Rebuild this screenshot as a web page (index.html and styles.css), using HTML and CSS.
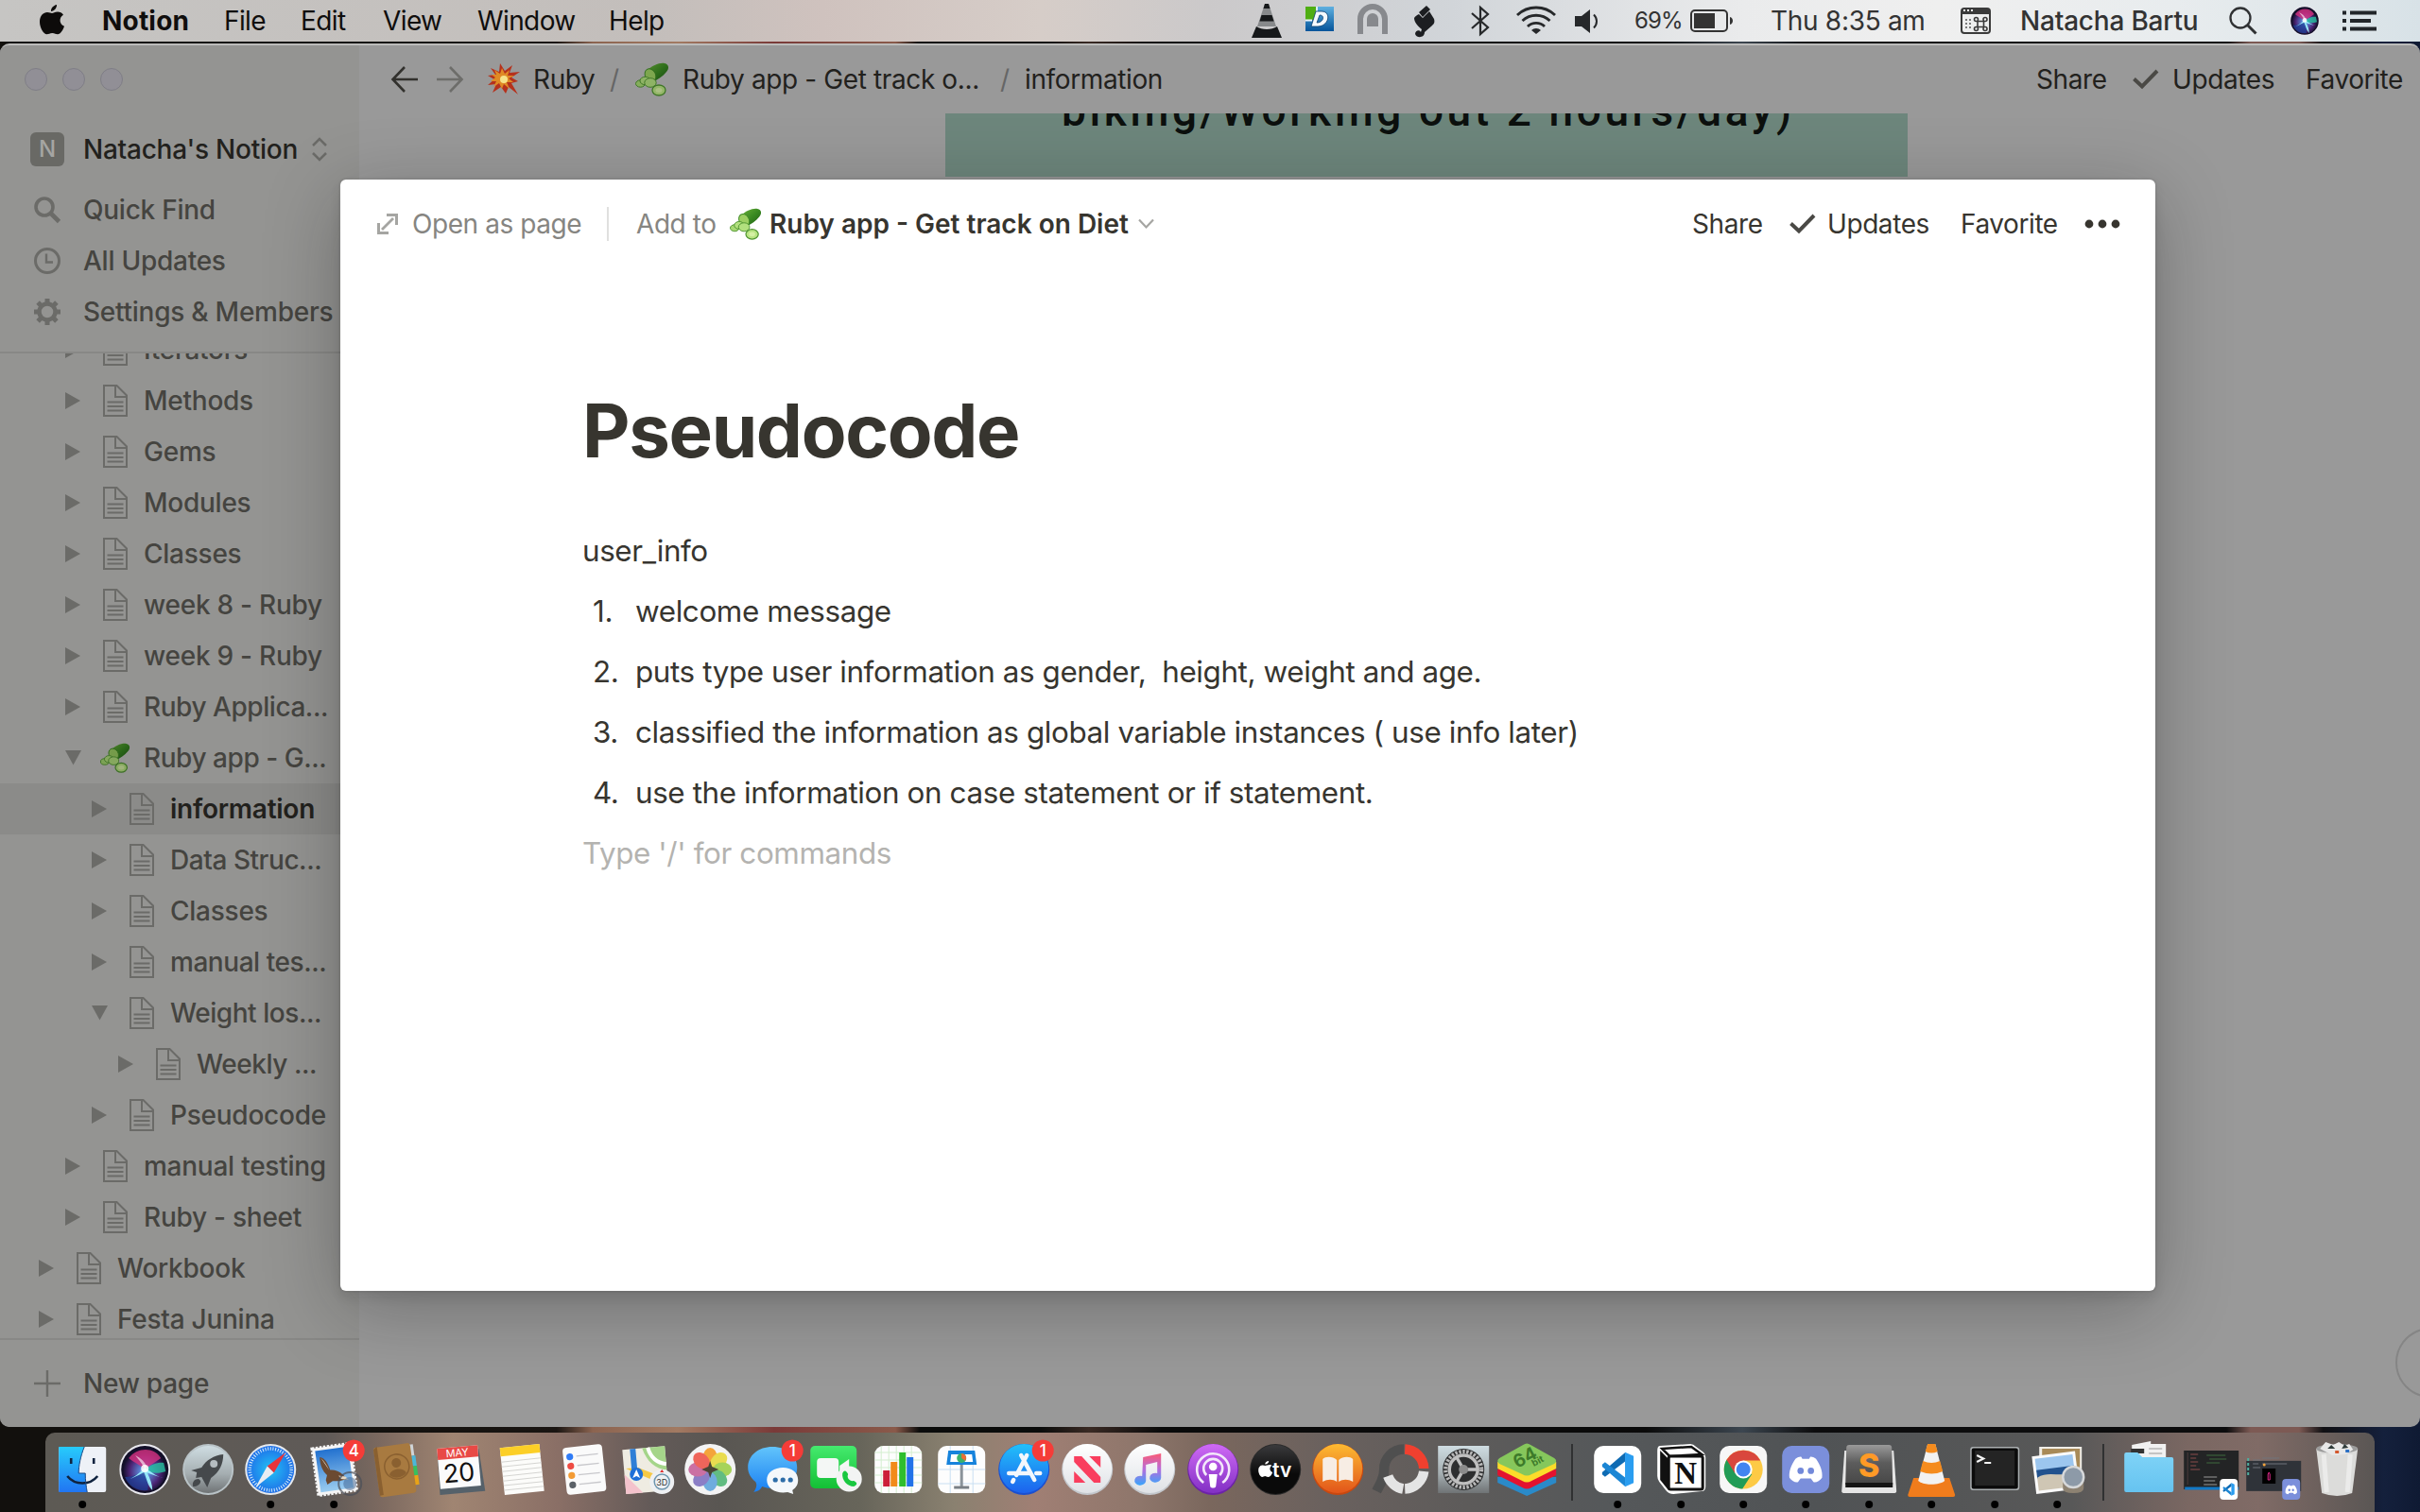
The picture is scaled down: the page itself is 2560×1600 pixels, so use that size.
FILE: index.html
```html
<!DOCTYPE html>
<html lang="en">
<head>
<meta charset="utf-8">
<title>Notion</title>
<link rel="stylesheet" href="styles.css">
</head>
<body>
<svg class="defs" aria-hidden="true">
  <defs>
    <linearGradient id="gCuke" x1="0" y1="0" x2="1" y2="1"><stop offset="0" stop-color="#6db23a"/><stop offset=".5" stop-color="#3a8a22"/><stop offset="1" stop-color="#1d5a12"/></linearGradient>
    <linearGradient id="gFinderL" x1="0" y1="0" x2="0" y2="1"><stop offset="0" stop-color="#27cbfb"/><stop offset="1" stop-color="#2175f3"/></linearGradient>
    <linearGradient id="gSilver" x1="0" y1="0" x2="0" y2="1"><stop offset="0" stop-color="#cfdde2"/><stop offset=".6" stop-color="#a4adb0"/><stop offset="1" stop-color="#6f7375"/></linearGradient>
    <radialGradient id="gSafari"><stop offset="0" stop-color="#22c3f5"/><stop offset="1" stop-color="#1f6fe8"/></radialGradient>
    <linearGradient id="gSky" x1="0" y1="0" x2="0" y2="1"><stop offset="0" stop-color="#2271cf"/><stop offset="1" stop-color="#9accf0"/></linearGradient>
    <linearGradient id="gMsg" x1="0" y1="0" x2="0" y2="1"><stop offset="0" stop-color="#62c4fb"/><stop offset="1" stop-color="#1a7ff2"/></linearGradient>
    <linearGradient id="gGreen" x1="0" y1="0" x2="0" y2="1"><stop offset="0" stop-color="#45ea6e"/><stop offset="1" stop-color="#13bf35"/></linearGradient>
    <linearGradient id="gStore" x1="0" y1="0" x2="0" y2="1"><stop offset="0" stop-color="#22c1fa"/><stop offset="1" stop-color="#1c62ee"/></linearGradient>
    <linearGradient id="gWhite" x1="0" y1="0" x2="0" y2="1"><stop offset="0" stop-color="#ffffff"/><stop offset="1" stop-color="#dfe2e6"/></linearGradient>
    <linearGradient id="gNote" x1="0" y1="0" x2="0" y2="1"><stop offset="0" stop-color="#fb5b74"/><stop offset=".5" stop-color="#b56ddd"/><stop offset="1" stop-color="#39a5fb"/></linearGradient>
    <linearGradient id="gPod" x1="0" y1="0" x2="0" y2="1"><stop offset="0" stop-color="#cf6af5"/><stop offset="1" stop-color="#8230c4"/></linearGradient>
    <linearGradient id="gTv" x1="0" y1="0" x2="0" y2="1"><stop offset="0" stop-color="#3a3a3c"/><stop offset=".6" stop-color="#0a0a0a"/></linearGradient>
    <linearGradient id="gBook" x1="0" y1="0" x2="0" y2="1"><stop offset="0" stop-color="#fdbb32"/><stop offset="1" stop-color="#e2551a"/></linearGradient>
    <linearGradient id="gSub" x1="0" y1="0" x2="0" y2="1"><stop offset="0" stop-color="#9a9a9a"/><stop offset=".45" stop-color="#5c5c5c"/><stop offset="1" stop-color="#474747"/></linearGradient>
    <linearGradient id="gFold" x1="0" y1="0" x2="0" y2="1"><stop offset="0" stop-color="#7fd3f7"/><stop offset="1" stop-color="#66c3f0"/></linearGradient>
    <radialGradient id="gSiri" cx=".5" cy=".55"><stop offset="0" stop-color="#bff6ff"/><stop offset=".25" stop-color="#5a7fd0"/><stop offset=".7" stop-color="#4b2474"/><stop offset="1" stop-color="#14102c"/></radialGradient>
    <linearGradient id="gD" x1="0" y1="0" x2="0" y2="1"><stop offset="0" stop-color="#5fb0e0"/><stop offset="1" stop-color="#04549a"/></linearGradient>

    <symbol id="cucumber" viewBox="0 0 36 36">
      <path d="M12 9C18 3 26 0 31 1c5 1 5 6 2 9-4 5-9 8-15 11z" fill="url(#gCuke)"/>
      <ellipse cx="16" cy="13.500" rx="5.500" ry="7" transform="rotate(-30 16 13.500)" fill="#9ccf62" stroke="#3f8a26"/>
      <ellipse cx="5.500" cy="22.500" rx="5" ry="3.700" fill="#a6d873" stroke="#4f9430"/>
      <ellipse cx="10.500" cy="19.500" rx="5.500" ry="4.200" fill="#b2e07e" stroke="#4f9430"/>
      <ellipse cx="16" cy="21.500" rx="6.200" ry="4.800" fill="#b2e07e" stroke="#4f9430"/>
      <ellipse cx="25" cy="29.500" rx="7" ry="5.500" fill="#b8e482" stroke="#4f9430" stroke-width="1.300"/>
      <ellipse cx="25" cy="29.500" rx="3.500" ry="2.500" fill="#d5f0a4"/>
    </symbol>
    <symbol id="page" viewBox="0 0 26 34">
      <path d="M1 1h13.500L25 11.500V33H1zM13 1v12h12" fill="none" stroke="currentColor" stroke-width="2"/>
      <path d="M4.500 18.500h17M4.500 23h17M4.500 27.500h17" stroke="currentColor" stroke-width="1.900"/>
    </symbol>
    <symbol id="right" viewBox="0 0 18 18"><path d="M0 0l16 9-16 9z" fill="currentColor"/></symbol>
    <symbol id="down" viewBox="0 0 18 18"><path d="M0 1h17L8.500 16.500z" fill="currentColor"/></symbol>
    <symbol id="check" viewBox="0 0 28 22"><path d="M1.500 10.500l8.500 8L26 2" fill="none" stroke="currentColor" stroke-width="4"/></symbol>
    <symbol id="siri" viewBox="-27 -27 54 54">
      <circle r="27" fill="#e8e8ee"/><circle r="25" fill="#120f28"/><circle r="23" fill="url(#gSiri)"/>
      <path d="M-17-12C-8-24 10-24 17-12 8-6 2-2 0 0-6-6-10-6-17-12z" fill="#d6317f" opacity=".8"/>
      <path d="M-21 8C-12 8-4 4 0 0 3 6 4 14 3 22-8 23-17 18-21 8z" fill="#1d3f96" opacity=".75"/>
      <path d="M22 2C14 5 6 4 0 0 8-6 14-8 20-7z" fill="#25c3a0" opacity=".8"/>
      <path d="M-21 13C-12 8-5 4 0-2 8 4 14 8 20 9 12 7 6 5 2 3 6 10 8 16 8 22 3 17 2 10-1 3-8 7-14 9-21 13z" fill="#9fF6ff" opacity=".9"/>
      <path d="M0-1C-4-8-8-12-10-15-4-12 0-8 2-3z" fill="#fff" opacity=".6"/>
      <circle cy="-1" r="4" fill="#fff" opacity=".85"/>
    </symbol>
    <symbol id="vscode" viewBox="0 0 40 44">
      <path d="M29 12L4 31l-3.500-3v-2.500L29 1z" fill="#0f6bb3"/>
      <path d="M29 32L4 13l-3.500 3v2.500L29 43z" fill="#1c86d4"/>
      <path d="M28.500 1L39 5.500v33L28.500 43z" fill="#2a9df0"/>
    </symbol>
    <symbol id="discord" viewBox="0 0 40 32">
      <path d="M8 3C11 1 14 0 15 1l1 2h8l1-2c1-1 4 0 7 2 5 7 8 15 7 22-3 4-7 6-10 5l-3-4H14l-3 4C8 31 4 29 1 25 0 18 3 10 8 3z" fill="#fff"/>
      <circle cx="14" cy="17" r="3.700" fill="#7289da"/><circle cx="26" cy="17" r="3.700" fill="#7289da"/>
    </symbol>
  </defs>
</svg>

<header class="menubar">
  <svg class="m-apple" viewBox="0 0 26 32"><path d="M18 0c.4 3-2.600 7-6 7-.4-3 2.600-6.500 6-7zM13 9c1.500 0 3-1.500 6-1.500 2.500 0 4.700 1.200 6 3.200-5 3-4.300 10 1 12-1 3.300-4 8.500-7 8.500-2.200 0-3-1.300-5.700-1.300S9.700 31.200 7.500 31.200C4 31.200 0 24.500 0 18 0 11.500 4 8 8 8c2.300 0 3.800 1 5 1z" fill="#0d0b0a"/></svg>
  <b class="t-notion">Notion</b><span>File</span><span>Edit</span><span>View</span><span>Window</span><span>Help</span>
  <svg width="32" height="36" viewBox="0 0 32 36"><path d="M14 0h4l8 24H6z" fill="#87898b"/><path d="M14 0h4l1.500 5h-7zM10.500 12h11l2 6.500h-15zM5 24c6 4 16 4 22 0l5 12H0z" fill="#16181a"/></svg>
  <svg class="up1" width="30" height="27" viewBox="0 0 30 27"><path d="M0 0h30v26H0z" fill="url(#gD)"/><path d="M0 0h11v14H0z" fill="#4fae12"/><path d="M12 0v8M0 14.500h7" stroke="#e8f4fa" stroke-width="1.800"/><path d="M11 5h6c11 0 8 16-4 16H6zM15 9l-3 8c7 0 9-8 3-8z" fill="#f4fafd" stroke="#0b3f70" stroke-width=".8" fill-rule="evenodd"/></svg>
  <svg class="up1" width="32" height="33" viewBox="0 0 32 33"><path d="M3 32V16a13 13 0 0 1 26 0v16" fill="none" stroke="#87898d" stroke-width="6"/><path d="M10 24v-8a6 6 0 0 1 12 0v8z" fill="#87898d"/></svg>
  <svg width="22" height="33" viewBox="0 0 22 33"><path d="M5 7l8-7 4 4-8 8zM5 9l4 4 7-7 5 8c1 4 0 5-2 7l-8 7c0 6-8 7-10 2 0-4 5-5 6-2l1-3C3 21 0 17 0 13c1-2 3-3 5-4z" fill="#1c1e21"/></svg>
  <svg width="20" height="32" viewBox="0 0 20 32"><path d="M1 8l17 15-8 7V2l8 7L1 24" fill="none" stroke="#26282a" stroke-width="2.200"/></svg>
  <svg class="up1" width="42" height="30" viewBox="0 0 42 30"><g fill="none" stroke="#26282a" stroke-width="2.900"><path d="M1 10a29 29 0 0 1 40 0M6.500 16a21 21 0 0 1 29 0M12 22a13 13 0 0 1 18 0"/></g><path d="M16 26a7 7 0 0 1 10 0l-5 4z" fill="#26282a"/></svg>
  <svg width="26" height="25" viewBox="0 0 26 25"><path d="M0 7h7l9-7v25l-9-7H0z" fill="#26282a"/><path d="M20 5.500c4 4 4 10 0 14" fill="none" stroke="#26282a" stroke-width="2"/></svg>
  <span class="t-batt">69%</span>
  <svg width="46" height="24" viewBox="0 0 46 24"><rect x="1" y="1" width="38" height="22" rx="4" fill="none" stroke="#333" stroke-width="2"/><rect x="4" y="4" width="22" height="16" fill="#333"/><path d="M42 8c4 1 4 7 0 8z" fill="#333"/></svg>
  <span class="t-clock">Thu 8:35 am</span>
  <svg width="32" height="28" viewBox="0 0 32 28"><rect x="1" y="1" width="30" height="26" rx="3" fill="none" stroke="#3a3a3a" stroke-width="2"/><path d="M1 1h30v6H1z" fill="#3a3a3a"/><path d="M3 3h2M7 3h2M11 3h2" stroke="#eee" stroke-width="2"/><path d="M5 13h2M9 13h2M5 17h2M9 17h2M5 21h2M9 21h2" stroke="#555" stroke-width="1.500"/><path d="M18 14.500h6.500v6H18zM18 14.500h-1.500a2 2 0 1 1 2-2zM24.500 14.500h1.500a2 2 0 1 0-2-2zM18 20.500h-1.500a2 2 0 1 0 2 2zM24.500 20.500h1.500a2 2 0 1 1-2 2z" fill="none" stroke="#3a3a3a" stroke-width="1.600"/></svg>
  <span class="t-user">Natacha Bartu</span>
  <svg width="30" height="30" viewBox="0 0 30 30"><circle cx="12" cy="12" r="10.500" fill="none" stroke="#2f3133" stroke-width="2.300"/><path d="M19 19l9.500 9.500" stroke="#2f3133" stroke-width="3"/></svg>
  <svg width="32" height="32"><use href="#siri"/></svg>
  <svg width="36" height="22" viewBox="0 0 36 22"><path d="M0 2.500h4M8 2.500h28M0 11h4M8 11h22M0 19.500h4M8 19.500h28" stroke="#22262a" stroke-width="3.800"/></svg>
</header>

<div class="window">
  <aside class="sidebar">
    <div class="lights"><i></i><i></i><i></i></div>
    <div class="workspace"><span class="badge">N</span><span class="ws-name">Natacha's Notion</span>
      <svg width="18" height="26" viewBox="0 0 18 26"><path d="M2 9l7-7 7 7M2 17l7 7 7-7" fill="none" stroke="#6b6b68" stroke-width="2.500"/></svg></div>
    <nav class="tools">
      <a><svg viewBox="0 0 28 28"><circle cx="11" cy="11" r="9" fill="none" stroke="currentColor" stroke-width="3.600"/><path d="M17.500 17.500l9 9" stroke="currentColor" stroke-width="4.600"/></svg><span>Quick Find</span></a>
      <a><svg viewBox="0 0 28 28"><circle cx="14" cy="14" r="12.500" fill="none" stroke="currentColor" stroke-width="3"/><path d="M13 6.500V15.500h7" fill="none" stroke="currentColor" stroke-width="2.400"/></svg><span>All Updates</span></a>
      <a><svg viewBox="-14 -14 28 28"><circle r="8.500" fill="none" stroke="currentColor" stroke-width="4.500"/><path d="M0-14V-9M0 9V14M-14 0H-9M9 0H14M-9.900-9.900L-7-7M7 7L9.900 9.900M-9.900 9.900L-7 7M7-7L9.900-9.900" stroke="currentColor" stroke-width="5"/></svg><span>Settings &amp; Members</span></a>
    </nav>
    <ul class="tree">
      <li class="l2"><svg class="tri"><use href="#right"/></svg><svg class="pg"><use href="#page"/></svg><span>Iterators</span></li>
      <li class="l2"><svg class="tri"><use href="#right"/></svg><svg class="pg"><use href="#page"/></svg><span>Methods</span></li>
      <li class="l2"><svg class="tri"><use href="#right"/></svg><svg class="pg"><use href="#page"/></svg><span>Gems</span></li>
      <li class="l2"><svg class="tri"><use href="#right"/></svg><svg class="pg"><use href="#page"/></svg><span>Modules</span></li>
      <li class="l2"><svg class="tri"><use href="#right"/></svg><svg class="pg"><use href="#page"/></svg><span>Classes</span></li>
      <li class="l2"><svg class="tri"><use href="#right"/></svg><svg class="pg"><use href="#page"/></svg><span>week 8 - Ruby</span></li>
      <li class="l2"><svg class="tri"><use href="#right"/></svg><svg class="pg"><use href="#page"/></svg><span>week 9 - Ruby</span></li>
      <li class="l2 cut"><svg class="tri"><use href="#right"/></svg><svg class="pg"><use href="#page"/></svg><span>Ruby Applica...</span></li>
      <li class="l2 cut"><svg class="tri"><use href="#down"/></svg><svg class="cuke"><use href="#cucumber"/></svg><span>Ruby app - G...</span></li>
      <li class="l3 active"><svg class="tri"><use href="#right"/></svg><svg class="pg"><use href="#page"/></svg><span>information</span></li>
      <li class="l3 cut"><svg class="tri"><use href="#right"/></svg><svg class="pg"><use href="#page"/></svg><span>Data Struc...</span></li>
      <li class="l3"><svg class="tri"><use href="#right"/></svg><svg class="pg"><use href="#page"/></svg><span>Classes</span></li>
      <li class="l3 cut"><svg class="tri"><use href="#right"/></svg><svg class="pg"><use href="#page"/></svg><span>manual tes...</span></li>
      <li class="l3 cut"><svg class="tri"><use href="#down"/></svg><svg class="pg"><use href="#page"/></svg><span>Weight los...</span></li>
      <li class="l4 cut"><svg class="tri"><use href="#right"/></svg><svg class="pg"><use href="#page"/></svg><span>Weekly ...</span></li>
      <li class="l3"><svg class="tri"><use href="#right"/></svg><svg class="pg"><use href="#page"/></svg><span>Pseudocode</span></li>
      <li class="l2"><svg class="tri"><use href="#right"/></svg><svg class="pg"><use href="#page"/></svg><span>manual testing</span></li>
      <li class="l2"><svg class="tri"><use href="#right"/></svg><svg class="pg"><use href="#page"/></svg><span>Ruby - sheet</span></li>
      <li class="l1"><svg class="tri"><use href="#right"/></svg><svg class="pg"><use href="#page"/></svg><span>Workbook</span></li>
      <li class="l1"><svg class="tri"><use href="#right"/></svg><svg class="pg"><use href="#page"/></svg><span>Festa Junina</span></li>
    </ul>
    <div class="newpage"><svg width="28" height="28" viewBox="0 0 28 28"><path d="M14 0v28M0 14h28" stroke="#6b6b68" stroke-width="2.400"/></svg><span>New page</span></div>
  </aside>
  <main class="main">
    <div class="topbar">
      <svg class="arrow dark" viewBox="0 0 28 28"><path d="M28 14H2M14 1L1.500 14 14 27" fill="none" stroke="currentColor" stroke-width="2.600"/></svg>
      <svg class="arrow" viewBox="0 0 28 28"><path d="M0 14h26M14 1l12.500 13L14 27" fill="none" stroke="currentColor" stroke-width="2.600"/></svg>
      <svg width="34" height="34" viewBox="0 0 34 34"><path d="M13 0l5 8 8-6-3 8 11-1-9 6 7 4-7 2 7 12-10-8-3 7-5-7-9 6 4-9-9 1 7-6-7-4 8-1-5-7 9 4z" fill="#b5311c"/><path d="M15 5l3 6 5-4-2 6 7 0-6 3 5 4-7 0 3 7-6-5-2 5-3-6-6 4 3-6-6 0 5-4-4-3 5 0-2-5 6 4z" fill="#e08a25"/><circle cx="17" cy="17" r="4" fill="#f6e38a"/></svg>
      <span>Ruby</span><span class="slash">/</span>
      <svg class="dimcuke" width="36" height="36"><use href="#cucumber"/></svg>
      <span>Ruby app - Get track o...</span><span class="slash">/</span><span>information</span>
      <span>Share</span><svg class="chk" width="28" height="22"><use href="#check"/></svg><span>Updates</span><span>Favorite</span>
    </div>
    <div class="banner"><span>biking/Working out 2 hours/day)</span></div>
    <div class="help"></div>
  </main>
</div>

<section class="modal">
  <div class="modalbar">
    <svg width="22" height="22" viewBox="0 0 22 22"><path d="M5 17L17 5" stroke="#a5a5a2" stroke-width="2.800"/><path d="M10 1.500h10.500V12M1.500 10v10.500H12" fill="none" stroke="#a5a5a2" stroke-width="3"/></svg>
    <span class="grey">Open as page</span><i class="rule"></i><span class="grey">Add to</span>
    <svg width="34" height="34"><use href="#cucumber"/></svg>
    <b class="t-diet">Ruby app - Get track on Diet</b>
    <svg width="17" height="12" viewBox="0 0 17 12"><path d="M1 1.500l7.500 8 7.500-8" fill="none" stroke="#a5a5a2" stroke-width="2.200"/></svg>
    <span>Share</span><svg class="chk" width="28" height="22"><use href="#check"/></svg><span>Updates</span><span>Favorite</span>
    <svg width="38" height="10" viewBox="0 0 38 10"><g fill="#37352f"><circle cx="5" cy="5" r="4.400"/><circle cx="19" cy="5" r="4.400"/><circle cx="33" cy="5" r="4.400"/></g></svg>
  </div>
  <article class="doc">
    <h1>Pseudocode</h1>
    <p>user_info</p>
    <ol>
      <li><i>1.</i><span>welcome message</span></li>
      <li><i>2.</i><span>puts type user information as gender,&nbsp; height, weight and age.</span></li>
      <li><i>3.</i><span>classified the information as global variable instances ( use info later)</span></li>
      <li><i>4.</i><span>use the information on case statement or if statement.</span></li>
    </ol>
    <p class="hint">Type '/' for commands</p>
  </article>
</section>

<footer class="dock">
  <svg class="ic" viewBox="-33 -39 66 84"><rect x="-25" y="-24" width="50" height="48" rx="2" fill="#eef1f7"/><path d="M-25-24H2C-2-14-4-4-4 4H3C3 12 4 18 5 24H-25z" fill="url(#gFinderL)"/><path d="M-16 7C-8 17 8 17 16 7M-12-12v6M12-12v6" fill="none" stroke="#10233f" stroke-width="2.600"/><path d="M2-24C-2-14-4-4-4 4H3C3 12 4 18 5 24" fill="none" stroke="#1b4a86" stroke-width="1"/><circle cy="37" r="4"/></svg>
  <svg class="ic" viewBox="-33 -39 66 84"><use href="#siri" x="-27" y="-27" width="54" height="54"/></svg>
  <svg class="ic" viewBox="-33 -39 66 84"><circle r="27" fill="#b9c3c7"/><circle r="25" fill="url(#gSilver)"/><path d="M16-16C6-15-2-10-7-2L-18 1-12 3-13 9-7 8-1 19 3 9C12 3 16-6 16-16z" fill="#45494c"/><circle cx="6" cy="-6" r="4" fill="#b4bcc0"/><path d="M-10 10C-16 10-17 15-16 18-12 18-8 16-8 12z" fill="#45494c"/></svg>
  <svg class="ic" viewBox="-33 -39 66 84"><circle r="27" fill="#e6e9ec"/><circle r="25" fill="url(#gSafari)"/><circle r="22" fill="none" stroke="#d7ecfb" stroke-width="3.500" stroke-dasharray="1 1.700"/><path d="M16-18L-3.500-3.500 3.500 3.500z" fill="#e8333a"/><path d="M-16 19L-3.500-3.500 3.500 3.500z" fill="#e9edf2"/><circle cy="37" r="4"/></svg>
  <svg class="ic" viewBox="-33 -39 66 84"><g transform="rotate(-8)"><rect x="-20" y="-25" width="41" height="50" fill="#f5f5f5" stroke="#f5f5f5" stroke-width="3" stroke-dasharray="2.500 1.500"/><rect x="-17" y="-22" width="35" height="44" fill="url(#gSky)"/><path d="M-13-15c5 1 8 8 9 15 4 0 9 2 13 7l3 5-8 1-7-1-6 3-1-5 2-5c-4-5-6-12-5-20z" fill="#6b4a32"/><path d="M-12-14c3 4 5 8 7 14M4 7l7 2 3 4-8-2z" fill="#e6d9c4"/></g><circle cx="17" cy="15" r="12" fill="none" stroke="#4a4f58" stroke-width="2" opacity=".7"/><circle cx="17" cy="15" r="7" fill="#3d5f8e" opacity=".5"/><circle cx="21" cy="-20" r="11.500" fill="#f53c38"/><text x="21" y="-14" class="bdg">4</text><circle cy="37" r="4"/></svg>
  <svg class="ic" viewBox="-33 -39 66 84"><g transform="rotate(-8)"><path d="M17-24h4v12h-4z" fill="#cfd4d8"/><path d="M17-12h5v11h-5z" fill="#4bb7d8"/><path d="M17-1h5v10h-5z" fill="#37c05e"/><path d="M17 9h5v10h-5z" fill="#e8a317"/><rect x="-21" y="-26" width="39" height="53" rx="3" fill="#a87a40"/><path d="M-21-24v49h4v-52z" fill="#8a6030"/><circle cx="1" cy="-3" r="13" fill="none" stroke="#8a6030" stroke-width="1.500"/><circle cx="1" cy="-7" r="5" fill="#8a6030"/><path d="M-8 5c2-7 16-7 18 0-5 5-13 5-18 0z" fill="#8a6030"/></g></svg>
  <svg class="ic" viewBox="-33 -39 66 84"><g transform="rotate(-5)"><path d="M-22-20L-23 25H25L22-20z" fill="#55616a"/><rect x="-22" y="-24" width="43" height="43" fill="#fbfbfb"/><path d="M-22-24h43v12h-43z" fill="#e84a46"/><text x="-1" y="-14" class="cal-m">MAY</text><text x="-1" y="13" class="cal-d">20</text></g></svg>
  <svg class="ic" viewBox="-33 -39 66 84"><g transform="rotate(-6)"><rect x="-21" y="-25" width="42" height="50" fill="#fcfcfa"/><path d="M-21-25h42v9h-42z" fill="#fccf27"/><path d="M-21-10h42M-21-5h42M-21 0h42M-21 5h42M-21 10h42M-21 15h42M-21 20h42" stroke="#d5d5d2"/></g></svg>
  <svg class="ic" viewBox="-33 -39 66 84"><g transform="rotate(-6)"><rect x="-21" y="-25" width="42" height="50" rx="4" fill="#fafafa"/><g><circle cx="-14" cy="-15" r="3.600" fill="#2f7bf6"/><circle cx="-14" cy="-5" r="3.600" fill="#ee4b42"/><circle cx="-14" cy="5" r="3.600" fill="#f39b34"/><circle cx="-14" cy="15" r="3.600" fill="#5b6167"/></g><path d="M-7-15h23M-7-5h23M-7 5h23M-7 15h23" stroke="#c8c8cc" stroke-width="1.300"/></g></svg>
  <svg class="ic" viewBox="-33 -39 66 84"><g transform="rotate(-5)"><rect x="-25" y="-23" width="45" height="47" fill="#efece2"/><path d="M-4-23h24V2C8 0 0-8-4-23z" fill="#a5d58a"/><path d="M2-23c2 10 8 17 18 19" fill="none" stroke="#fff" stroke-width="4"/><path d="M-23-3L20 20V12L-10-3z" fill="#f6c945"/><path d="M-25 3l18 21h-18z" fill="#f4c2cc"/><path d="M-14-23v30" stroke="#2f7fd6" stroke-width="6"/></g><circle cx="-12" cy="5" r="7" fill="#1f70d8"/><path d="M-12 0l4 9-4-2-4 2z" fill="#fff"/><circle cx="15" cy="13" r="13" fill="#eef0f3"/><circle cx="15" cy="13" r="8" fill="none" stroke="#6d95ae" stroke-width="1.500"/><text x="15" y="16.500" class="tiny">3D</text><path d="M15 0l2 3h-4z" fill="#e02b2b"/></svg>
  <svg class="ic" viewBox="-33 -39 66 84"><circle r="27" fill="#f3f3f4"/><g opacity=".88"><ellipse cy="-13" rx="7.500" ry="10" fill="#f59a22"/><ellipse cy="-13" rx="7.500" ry="10" fill="#e8d93a" transform="rotate(45)"/><ellipse cy="-13" rx="7.500" ry="10" fill="#9ccf45" transform="rotate(90)"/><ellipse cy="-13" rx="7.500" ry="10" fill="#4fb573" transform="rotate(135)"/><ellipse cy="-13" rx="7.500" ry="10" fill="#5da3dc" transform="rotate(180)"/><ellipse cy="-13" rx="7.500" ry="10" fill="#7d6fc0" transform="rotate(225)"/><ellipse cy="-13" rx="7.500" ry="10" fill="#c65f98" transform="rotate(270)"/><ellipse cy="-13" rx="7.500" ry="10" fill="#ef5246" transform="rotate(315)"/></g><path d="M0-9L2-3 9 0 2 3 0 9-2 3-9 0-2-3z" fill="#4b4534"/></svg>
  <svg class="ic" viewBox="-33 -39 66 84"><path d="M-1-24c15 0 26 9 26 22S14 20-1 20c-4 0-8-1-11-2-2 4-5 5-9 6 3-4 4-8 2-11-5-4-8-9-8-15 0-13 11-22 26-22z" fill="url(#gMsg)"/><path d="M10-2c9 0 16 5 16 13 0 5-2 8-6 11l1 4-6-2C4 26-7 21-7 11-7 3 1-2 10-2z" fill="#f4f8fb"/><g fill="#2d6da8"><circle cx="2" cy="11" r="2.600"/><circle cx="10" cy="11" r="2.600"/><circle cx="18" cy="11" r="2.600"/></g><circle cx="20" cy="-20" r="11.500" fill="#f53c38"/><text x="20" y="-14" class="bdg">1</text></svg>
  <svg class="ic" viewBox="-33 -39 66 84"><rect x="-27" y="-25" width="49" height="45" rx="5" fill="url(#gGreen)"/><rect x="-20" y="-12" width="23" height="21" rx="4" fill="#f4f7f5"/><path d="M4-4L14-11V8L4 2z" fill="#f4f7f5"/><circle cx="14" cy="10" r="13.500" fill="#f2f4f3"/><path d="M7 4c2-4 4-3 6 1-2 4 2 8 6 7 4 2 4 4 0 6C12 18 6 11 7 4z" fill="#19c840"/></svg>
  <svg class="ic" viewBox="-33 -39 66 84"><rect x="-25" y="-25" width="50" height="50" rx="9" fill="#fdfdfd"/><path d="M-18-25v50M-10-25v50M-2-25v50M6-25v50M14-25v50M-25-18h50M-25-10h50M-25-2h50M-25 6h50M-25 14h50" stroke="#d3efcf"/><path d="M-16 1h7v17h-7z" fill="#cc1f38"/><path d="M-8-8h7v26h-7z" fill="#f28a1a"/><path d="M1-18h7v36h-7z" fill="#2fbe2d"/><path d="M9-13h7v31h-7z" fill="#2272e8"/></svg>
  <svg class="ic" viewBox="-33 -39 66 84"><rect x="-25" y="-25" width="50" height="50" rx="9" fill="#fdfdfd"/><path d="M-25 0h50M-25 15h50M-12-25v50M12-25v50" stroke="#c9dff2"/><path d="M-14-20h28l2 15h-32z" fill="#1683dc"/><path d="M-11-16h22l1 8h-24z" fill="#fff"/><circle cy="-12" r="5" fill="#3bb36a"/><path d="M0-17a5 5 0 0 1 4 8L0-12z" fill="#ee6c36"/><path d="M0-5v23" stroke="#8b939a" stroke-width="3"/><path d="M-8 19h16" stroke="#7a8086" stroke-width="3"/></svg>
  <svg class="ic" viewBox="-33 -39 66 84"><circle r="27" cy="0" fill="#1a4fd0"/><circle r="26" cy="-1" fill="url(#gStore)"/><path d="M-3-15L11 11M3-15L-8 6M-11 11l-1 2M-16 4H5M13 4h4" stroke="#f3f7fc" stroke-width="4.500" stroke-linecap="round"/><circle cx="20" cy="-20" r="11.500" fill="#f53c38"/><text x="20" y="-14" class="bdg">1</text></svg>
  <svg class="ic" viewBox="-33 -39 66 84"><circle r="27" cy="0" fill="#c3c7cc"/><circle r="26" cy="-1" fill="url(#gWhite)"/><path d="M-14-14h8L14 8v6H7L-14-8zM2-14h12V-2zM-14 2L-2 14h-12z" fill="#f93e5e"/></svg>
  <svg class="ic" viewBox="-33 -39 66 84"><circle r="27" cy="0" fill="#c3c7cc"/><circle r="26" cy="-1" fill="url(#gWhite)"/><path d="M-7-13L12-17V9a6 5 0 1 1-4-5V-8L-4-5V12a6 5 0 1 1-4-5z" fill="url(#gNote)"/></svg>
  <svg class="ic" viewBox="-33 -39 66 84"><circle r="27" fill="#6d22a8"/><circle r="26" cy="-1" fill="url(#gPod)"/><g fill="none" stroke="#f3e8fa" stroke-width="2.600"><path d="M-10 14a17 17 0 1 1 20 0"/><path d="M-7 6a10 10 0 1 1 14 0"/></g><circle cy="-3" r="4.300" fill="#fff"/><path d="M-4.500 5h9L3 18c-1 2-5 2-6 0z" fill="#fff"/></svg>
  <svg class="ic" viewBox="-33 -39 66 84"><circle r="27" fill="#2b2b2b"/><circle r="26" fill="url(#gTv)"/><path d="M-7-9c0 2-2 3.500-4 3.500 0-2 2-3.500 4-3.500zM-11-4c2 0 6-2 7 0-3 2-2 6 1 7-1 3-3 5-5 5-1 0-2-1-3-1s-2 1-3 1c-2 0-4-4-4-7 0-6 5-6 7-5z" fill="#fff"/><text x="7" y="8" class="tv">tv</text></svg>
  <svg class="ic" viewBox="-33 -39 66 84"><circle r="27" fill="#c9480f"/><circle r="26" cy="-1" fill="url(#gBook)"/><path d="M-1-10C-5-14-13-14-16-11V13c5-3 11-3 15 0zM1-10C5-14 13-14 16-11V13C11 10 5 10 1 13z" fill="#f7ede4"/></svg>
  <svg class="ic" viewBox="-33 -39 66 84"><g fill="none" stroke-width="10.500" transform="translate(3 0)"><path d="M0-21.500A21 21 0 0 0-21 0C-21 10-25 15-29 23" stroke="#4f4f4f"/><path d="M1-21.500A21 21 0 0 1 21-1" stroke="#f0402f"/><path d="M21 2A21 21 0 0 1 1 20.500M-1 20.500A21 21 0 0 1-17 7" stroke="#e4e4e4"/></g></svg>
  <svg class="ic" viewBox="-33 -39 66 84"><rect x="-27" y="-25" width="54" height="50" fill="url(#gSilver)"/><circle r="22" fill="#2e2f30"/><circle r="19" fill="none" stroke="#b8b8b8" stroke-width="4" stroke-dasharray="2.400 1.600"/><circle r="15" fill="none" stroke="#bfbfbf" stroke-width="3.500"/><path d="M0 0H16M0 0L-8-14M0 0L-8 14" stroke="#bfbfbf" stroke-width="3.500"/><circle r="5" fill="#8b8b8b"/></svg>
  <svg class="ic" viewBox="-33 -39 66 84"><path d="M-31 14L0 28 31 14 31 8-31 8z" fill="#2a8ac9"/><path d="M-31 6L-5 19Q0 22 5 19L31 6V0H-31z" fill="#e3122f"/><path d="M-31-1L-5 12Q0 15 5 12L31-1V-8H-31z" fill="#fbdc2a"/><path d="M-4-26Q0-29 4-26L29-12Q33-9 29-6L5 5Q0 8-5 5L-29-6Q-33-9-29-12z" fill="#86c75c"/><text class="bs" transform="translate(1 -7) rotate(-28)">64</text><text class="bs2" transform="translate(13 -6) rotate(-28)">bit</text></svg>
  <i class="sep"></i>
  <svg class="ic" viewBox="-33 -39 66 84"><rect x="-25" y="-25" width="50" height="50" rx="10" fill="#fff"/><use href="#vscode" x="-18" y="-19" width="37" height="38"/><circle cy="37" r="4"/></svg>
  <svg class="ic" viewBox="-33 -39 66 84"><path d="M-22-25L10-27Q13-27 16-24L24-18Q26-16 26-13V18Q26 23 22 23L-8 26Q-13 26-16 22L-23 13Q-25 10-25 7V-20Q-25-25-22-25z" fill="#fff"/><path d="M-20-22L11-24 22-16-12-14z" fill="#fff" stroke="#111" stroke-width="2.500"/><path d="M-22-20L-14-12V21L-22 11z" fill="#111"/><rect x="-13" y="-14" width="36" height="35" rx="2" fill="#fff" stroke="#111" stroke-width="3"/><text x="5" y="15" class="nn">N</text><circle cy="37" r="4"/></svg>
  <svg class="ic" viewBox="-33 -39 66 84"><rect x="-25" y="-25" width="50" height="50" rx="10" fill="#f7f7f7"/><circle r="20.500" fill="#fdca45"/><path d="M0 0L-17.700-10.300A20.500 20.500 0 0 0-1 20.500L9 5z" fill="#229c56"/><path d="M0-9.500L18-9.500A20.500 20.500 0 0 0-17.700-10.300L-9 4z" fill="#d9473d"/><circle r="9.500" fill="#fff"/><circle r="7.500" fill="#4285f0"/><circle cy="37" r="4"/></svg>
  <svg class="ic" viewBox="-33 -39 66 84"><rect x="-25" y="-25" width="50" height="50" rx="10" fill="#7b8fdb"/><use href="#discord" x="-19" y="-14" width="38" height="29"/><circle cy="37" r="4"/></svg>
  <svg class="ic" viewBox="-33 -39 66 84"><path d="M-26-20h52l3 43q0 2-3 2h-52q-3 0-3-2z" fill="#e5e5e5"/><path d="M-21-26h42q3 0 3 3l1 39h-50l1-39q0-3 3-3z" fill="url(#gSub)"/><path d="M-25 14h50v5h-50z" fill="#161616"/><text y="8" class="subl">S</text><circle cy="37" r="4"/></svg>
  <svg class="ic" viewBox="-33 -39 66 84"><path d="M-19 9h38l6 18q0 2-2 2h-46q-2 0-2-2z" fill="#f07c1c"/><path d="M-4-27h8L14 12c-6 5-22 5-28 0z" fill="#f2f2f2"/><path d="M-4-27h8l2.500 8q-6.500 3-13 0zM-9-9q9 4 18 0l3 11q-12 5-24 0z" fill="#f58c1e"/><circle cy="37" r="4"/></svg>
  <svg class="ic" viewBox="-33 -39 66 84"><rect x="-26" y="-24" width="52" height="46" rx="3" fill="#a9adaf"/><rect x="-24.500" y="-22.500" width="49" height="43" rx="2" fill="#0b0b0b"/><rect x="-21" y="-20" width="42" height="37" fill="#242424"/><path d="M-19-15l7 3.500-7 3.500M-11-7h7" fill="none" stroke="#f4f4f4" stroke-width="2.200"/><circle cy="37" r="4"/></svg>
  <svg class="ic" viewBox="-33 -39 66 84"><rect x="-19" y="-24" width="45" height="40" fill="#f0eee8"/><rect x="-16" y="-22" width="40" height="34" fill="#a88a58"/><g transform="rotate(-7)"><rect x="-25" y="-17" width="46" height="40" fill="#fafafa"/><path d="M-22-14h40V0h-40z" fill="#9cc6ef"/><path d="M-22-2h40v9h-40z" fill="#22528e"/><path d="M-22 6c12-6 22 2 40 0v14h-40z" fill="#cfc6b4"/></g><path d="M6 8v12q0 5 11 5t11-5V8z" fill="#8d8272"/><circle cx="17" cy="8" r="11" fill="#8d9aa8" stroke="#d6d8da" stroke-width="2.500"/><circle cy="37" r="4"/></svg>
  <i class="sep"></i>
  <svg class="ic" viewBox="-33 -39 66 84"><path d="M-18-26L2-30V0h-20zM-4-27h22V0H-4z" fill="#f1f1f1"/><path d="M-19-22h14v5h-14z" fill="#333"/><path d="M0-22h14M0-17h14M-16-12h10" stroke="#b5b5b5" stroke-width="1.500"/><path d="M-26-16q0-2 2-2h12l5 5h31q2 0 2 2V22q0 2-2 2h-48q-2 0-2-2z" fill="url(#gFold)"/></svg>
  <svg class="ic" viewBox="-33 -39 66 84"><rect x="-29" y="-20" width="58" height="41" fill="#232425"/><path d="M-25-18v34" stroke="#4a3a3a" stroke-width="1"/><path d="M-28 20h57" stroke="#1279c6" stroke-width="3"/><path d="M-22-16h8M-22-12h6M-22-8h8M-22-4h6M-22 0h10" stroke="#6a3f3f" stroke-width="1.300"/><path d="M-5-15h20M-2-11h18M-5-7h14" stroke="#3f6b3f" stroke-width="1.200"/><path d="M-8 8h14M-8 12h12M-8 16h14" stroke="#9a9a9a" stroke-width="1"/><rect x="9" y="14" width="19" height="22" rx="4" fill="#fff" transform="translate(0 -4)"/><use href="#vscode" x="12" y="14" width="13" height="14"/></svg>
  <svg class="ic" viewBox="-33 -39 66 84"><rect x="-29" y="-16" width="58" height="39" fill="#2f3339" transform="translate(0 4) scale(1 .82)"/><path d="M-27-12v20" stroke="#4fb0a0" stroke-width="2" stroke-dasharray="3 2"/><path d="M-22-10h8M-22-6h6M-22-2h8M-12-12h18M-12-6h26" stroke="#71757c" stroke-width="1.200"/><circle cx="-10" cy="-5" r="1.500" fill="#f2a33c"/><rect x="-12" y="-1" width="14" height="16" fill="#000"/><path d="M-6 11v-6l1-2 1 2v6z" fill="none" stroke="#e0288c"/><rect x="9" y="10" width="19" height="22" rx="4" fill="#7b8fdb"/><use href="#discord" x="12" y="16" width="13" height="11"/></svg>
  <svg class="ic" viewBox="-33 -39 66 84"><path d="M-22-22H22L16 25Q0 31-16 25z" fill="#dcdcda"/><path d="M-14-16l3 40M14-16l-3 40" stroke="#efefee" stroke-width="5" opacity=".8"/><ellipse cy="-22" rx="22" ry="5" fill="#9c9c9c"/><path d="M-18-22l6-7 8 3 6-3 6 4 5-2 4 6-8 5-14 1z" fill="#e8e8e8"/><path d="M-10-22l4-4 4 4zM5-22l3-5 4 4z" fill="#2f3b3a"/><path d="M-2-20h4v3h-4z" fill="#d3572c"/><path d="M9-21h4v3h-4z" fill="#2b6fc4"/></svg>
</footer>
</body>
</html>
```
FILE: styles.css
```css
* { box-sizing: border-box; }
body {
  margin: 0;
  width: 2560px;
  height: 1600px;
  overflow: hidden;
  position: relative;
  display: flex;
  flex-direction: column;
  font-family: Inter, "Liberation Sans", sans-serif;
  font-size: 28px;
  color: #37352f;
  background: linear-gradient(90deg, #12100d 0 15%, #1a1512 23%, #8c6450 24.5%, #a27a62 28%, #7a3a38 32%, #8a5a4a 37%, #0b0c0b 38% 43%, #3a2a24 45%, #0a0a0a 48% 68%, #3c4650 72%, #0c0c0d 75% 92%, #7d5a54 93% 95%, #101013 96%, #14203c 98.500%, #0f1a33);
}
.defs { position: absolute; width: 0; height: 0; }
svg { display: block; flex: none; overflow: visible; }
span, b { white-space: nowrap; }
i { font-style: normal; }

.menubar {
  flex: none;
  height: 44px;
  display: grid;
  align-items: center;
  padding-left: 42px;
  grid-template-columns: 66px 129px 81px 87px 100px 139px 680px 57px 55px 60px 60px 48px 62px 63px 59px 85px 201px 63px 221px 64px 56px 40px;
  background: linear-gradient(90deg, #c6c5c3, #c3bebb 27%, #cfc2be 34%, #d6cdc8 43%, #cbc9ca 50%, #d1d5d9 60%, #eaebec 72%, #efefef 80%, #e8ecee 90%, #d8e2e7);
  color: #100e0d;
  letter-spacing: -0.6px;
  line-height: 44px;
}
.m-apple { width: 26px; height: 32px; margin-top: -3px; }
.up1 { margin-top: -3px; }
.t-notion { letter-spacing: 0.2px; }
.t-batt { font-size: 24px; letter-spacing: -0.9px; color: #333; }
.t-clock, .t-user { color: #333; letter-spacing: -0.3px; }
.t-user { font-weight: 500; letter-spacing: -0.2px; }

.window {
  flex: none;
  height: 1464px;
  margin-top: 2px;
  display: flex;
  border-radius: 10px;
  overflow: hidden;
  background: #999;
  border-top: 2px solid #bcbcbb;
}
.sidebar {
  width: 380px;
  flex: none;
  background: #949492;
  color: #454440;
  font-weight: 500;
  letter-spacing: -0.25px;
  display: flex;
  flex-direction: column;
  overflow: hidden;
}
.lights { display: flex; gap: 16px; padding: 24px 0 0 26px; height: 83px; }
.lights i { width: 24px; height: 24px; border-radius: 50%; border: 1.500px solid #7f7e86; background: #918f96; }
.workspace { display: flex; align-items: center; height: 54px; padding-left: 32px; color: #22211d; margin-bottom: 10px; }
.badge { width: 36px; height: 36px; border-radius: 6px; background: #696965; color: #a5a5a2; font-size: 24px; line-height: 36px; text-align: center; margin-right: 20px; }
.ws-name { width: 241px; }
.tools a { display: flex; align-items: center; height: 54px; padding-left: 36px; width: 353px; overflow: hidden; }
.tools svg { width: 28px; height: 28px; color: #6b6b68; margin-right: 24px; }
.tree { list-style: none; margin: 15px 0 0; padding: 0; height: 1048px; overflow: hidden; border-top: 2px solid #888886; border-bottom: 2px solid #888886; }
.tree li { display: flex; align-items: center; height: 54px; }
.tree li:first-child { margin-top: -31px; }
.tri { width: 18px; height: 18px; color: #6b6b68; margin-right: 22px; }
.pg { width: 26px; height: 34px; color: #6b6b68; margin-right: 17px; }
.cuke { width: 36px; height: 32px; margin: 0 12px 0 -5px; filter: brightness(.75); }
.l1 { padding-left: 41px; }
.l2 { padding-left: 69px; }
.l3 { padding-left: 97px; }
.l4 { padding-left: 125px; }
.cut { letter-spacing: -0.45px; }
.active { background: #8b8b89; color: #22211d; font-weight: 600; }
.newpage { display: flex; align-items: center; gap: 24px; height: 92px; padding-left: 36px; }

.main { flex: 1; display: flex; flex-direction: column; position: relative; color: #22211d; }
.topbar {
  height: 72px;
  display: grid;
  align-items: center;
  padding-left: 34px;
  letter-spacing: -0.38px;
  grid-template-columns: 48px 54px 48px 81px 27px 50px 336px 26px 1070px 102px 42px 141px 102px;
}
.arrow { width: 28px; height: 28px; color: #6d6d6a; }
.dark { color: #32312d; }
.dimcuke { filter: brightness(.8); }
.slash { color: #666; }
.banner { margin-left: 620px; width: 1018px; height: 67px; background: #6d867c; overflow: hidden; color: #0c100e; font: 500 46px/46px Roboto, sans-serif; letter-spacing: 3.600px; padding-left: 123px; }
.banner span { display: block; margin-top: -26px; }
.help { position: absolute; right: -48px; bottom: 31px; width: 74px; height: 74px; border-radius: 50%; border: 2px solid #858585; }

.modal {
  position: absolute;
  left: 360px;
  top: 190px;
  width: 1920px;
  height: 1176px;
  background: #fff;
  border-radius: 6px;
  box-shadow: 0 0 0 2px rgba(15,15,15,.03), 0 6px 12px rgba(15,15,15,.1), 0 18px 80px rgba(15,15,15,.3);
}
.modalbar {
  height: 93px;
  display: grid;
  align-items: center;
  padding-left: 39px;
  letter-spacing: -0.42px;
  grid-template-columns: 37px 206px 31px 99px 42px 390px 586px 103px 40px 141px 131px 40px;
}
.grey { color: #868581; }
.rule { width: 2px; height: 36px; background: #e0e0df; }
.t-diet { font-weight: 600; letter-spacing: 0; }
.chk { color: #4a4945; }
.doc { padding: 130px 0 0 256px; font-size: 31.400px; line-height: 64px; letter-spacing: -0.39px; }
h1 { margin: 0 0 52px; font-size: 78px; line-height: 86px; font-weight: 700; letter-spacing: -1.350px; }
p, ol { margin: 0; padding: 0; }
.doc li { display: flex; padding-left: 11px; }
.doc li i { width: 45px; }
.hint { color: #b4b3b0; }

.dock {
  flex: none;
  margin: 6px 48px 0;
  height: 84px;
  padding-left: 6px;
  display: flex;
  border-radius: 10px 10px 0 0;
  background: linear-gradient(90deg, #5d5a54 0, #5f5a57 12%, #7d6a60 14.500%, #a08572 17.500%, #8a6f66 22%, #635a58 26%, #595652 29%, #67655a 35%, #8a8170 39%, #a07f74 42.500%, #8e766b 47%, #7a675d 50%, #6a615e 55%, #5d5b5a 61%, #55585a 67%, #505355 76%, #585858 87%, #7a6762 92%, #806b66 95%, #5a5654);
}
.ic { width: 66.430px; height: 84px; }
.sep { width: 2px; height: 60px; margin: 12px 14px 0; background: #303132; }
.dock text { text-anchor: middle; font-family: Inter, sans-serif; }
.bdg { font-size: 17px; fill: #fff; font-weight: 500; }
.cal-m { font-size: 11px; fill: #fff; }
.cal-d { font-size: 27px; fill: #111; }
.tiny { font-size: 9px; fill: #333; }
.tv { font-size: 21px; font-weight: 600; fill: #fff; }
.bs { font-size: 19px; font-weight: 700; fill: #3d7a2a; }
.bs2 { font-size: 10px; font-weight: 700; fill: #3d7a2a; }
.dock .nn { font-family: "Liberation Serif", serif; font-size: 33px; font-weight: 700; fill: #111; }
.subl { font-size: 34px; font-weight: 800; fill: #ff9a26; }
```
